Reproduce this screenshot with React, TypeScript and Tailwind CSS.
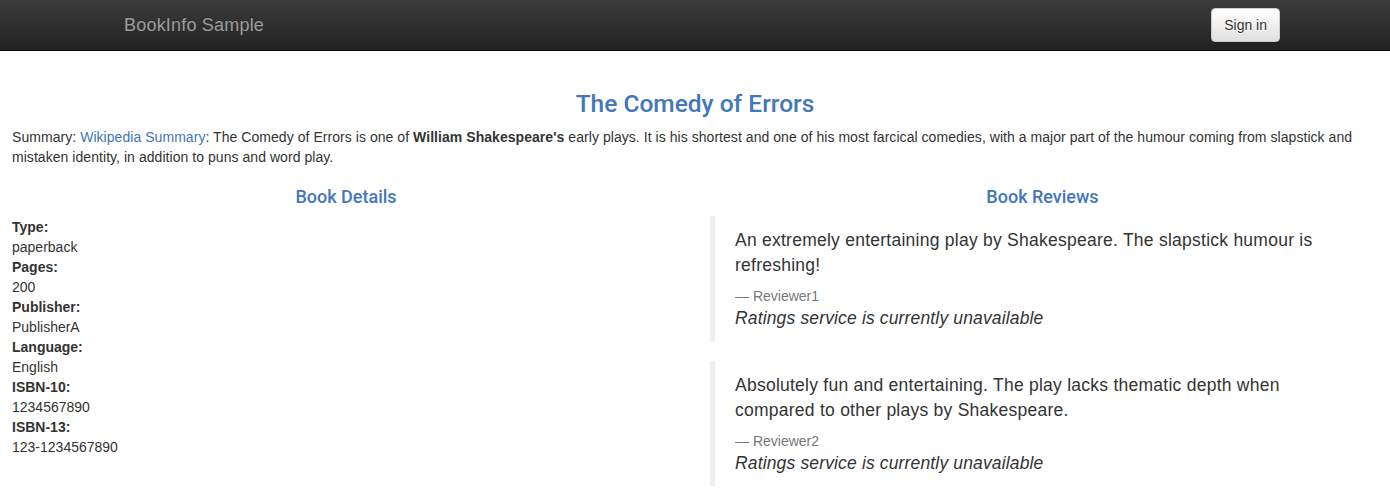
import React from "react";

const details: [string, string][] = [
  ["Type:", "paperback"],
  ["Pages:", "200"],
  ["Publisher:", "PublisherA"],
  ["Language:", "English"],
  ["ISBN-10:", "1234567890"],
  ["ISBN-13:", "123-1234567890"],
];

const reviews = [
  {
    text: "An extremely entertaining play by Shakespeare. The slapstick humour is refreshing!",
    reviewer: "Reviewer1",
  },
  {
    text: "Absolutely fun and entertaining. The play lacks thematic depth when compared to other plays by Shakespeare.",
    reviewer: "Reviewer2",
  },
];

export default function App() {
  return (
    <div
      className="min-h-[503px] bg-white text-[#333] text-[14px] leading-[20px]"
      style={{ fontFamily: '"Liberation Sans", Arial, Helvetica, sans-serif' }}
    >
      <nav className="h-[51px] border-b border-[#080808] bg-[linear-gradient(to_bottom,#3c3c3c_0%,#222_100%)]">
        <div className="mx-auto flex h-[50px] w-[1170px] items-center justify-between">
          <a className="pl-[14px] text-[18px] leading-[20px] tracking-[0.2px] text-[#9d9d9d] [text-shadow:0_-1px_0_rgba(0,0,0,0.25)]">
            BookInfo Sample
          </a>
          <button
            type="button"
            className="h-[34px] rounded-[4px] border border-[#ccc] bg-[linear-gradient(to_bottom,#fff_0%,#e0e0e0_100%)] px-[12px] text-[14px] leading-[20px] text-[#333] shadow-[inset_0_1px_0_rgba(255,255,255,0.15),0_1px_1px_rgba(0,0,0,0.075)] [text-shadow:0_1px_0_#fff]"
          >
            Sign in
          </button>
        </div>
      </nav>

      <div className="pt-[20px]">
        <div className="px-[12px]">
          <h3 className="mt-[20px] mb-[10px] text-center font-['Roboto',sans-serif] text-[24.5px] leading-[26.4px] font-medium text-[#4277b8]">
            The Comedy of Errors
          </h3>
          <p className="mb-[10px] tracking-[0.05px]">
            Summary: <a className="text-[#3f77b8]">Wikipedia Summary</a>: The Comedy of Errors is one of{" "}
            <b>William Shakespeare's</b> early plays. It is his shortest and one of his most farcical comedies,
            with a major part of the humour coming from slapstick and mistaken identity, in addition to puns and
            word play.
          </p>
        </div>

        <div className="grid grid-cols-2">
          <div className="pl-[12px] pr-[15px]">
            <h4 className="mt-[10px] mb-[10px] text-center font-['Roboto',sans-serif] text-[18px] leading-[19.8px] font-medium text-[#4277b8]">
              Book Details
            </h4>
            <dl>
              {details.map(([k, v]) => (
                <React.Fragment key={k}>
                  <dt className="font-bold">{k}</dt>
                  <dd className="ml-0">{v}</dd>
                </React.Fragment>
              ))}
            </dl>
          </div>
          <div className="px-[15px]">
            <h4 className="mt-[10px] mb-[9px] text-center font-['Roboto',sans-serif] text-[18px] leading-[19.8px] font-medium text-[#4277b8]">
              Book Reviews
            </h4>
            {reviews.map((r) => (
              <blockquote
                key={r.reviewer}
                className="mb-[20px] border-l-[5px] border-[#eee] px-[20px] py-[10px] text-[17.5px] leading-[25px] tracking-[0.25px]"
              >
                <p className="pt-[2px] mb-[8px]">{r.text}</p>
                <small className="block text-[14px] leading-[20px] tracking-normal text-[#777]">
                  {"\u2014\u00a0"}
                  {r.reviewer}
                </small>
                <p className="tracking-[0.15px]">
                  <i>Ratings service is currently unavailable</i>
                </p>
              </blockquote>
            ))}
          </div>
        </div>
      </div>
    </div>
  );
}
